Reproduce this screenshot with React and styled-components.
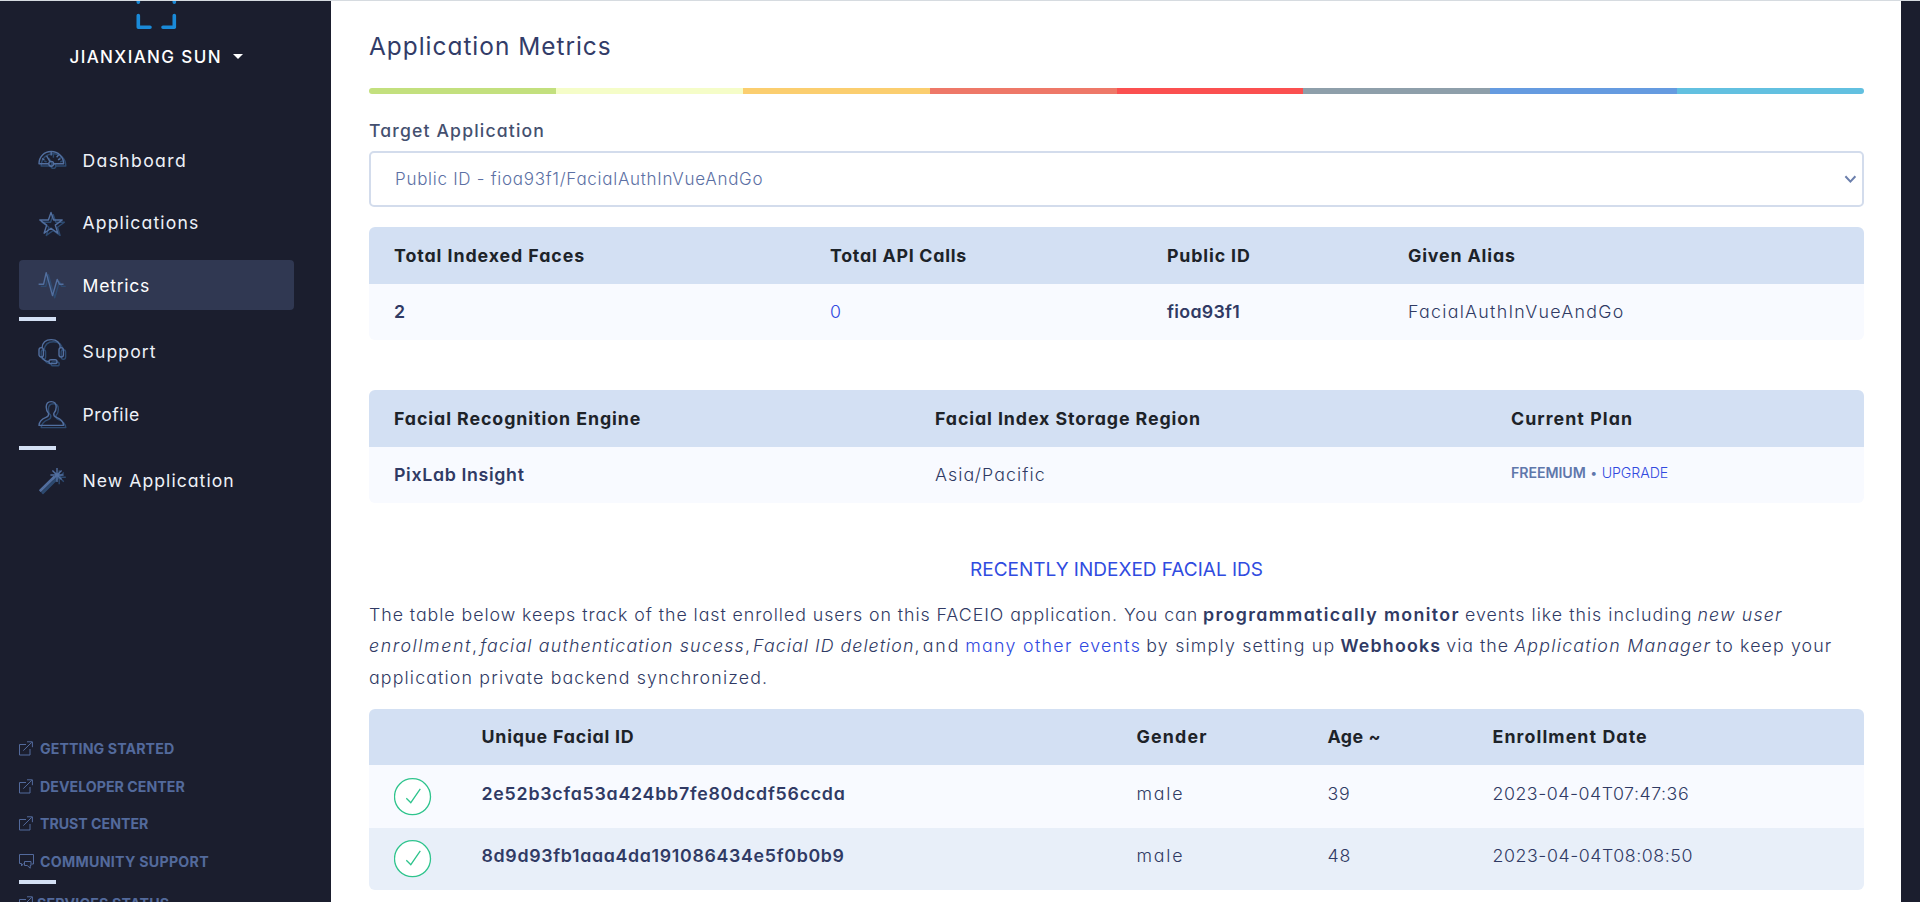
import React from 'react';
import styled, { createGlobalStyle } from 'styled-components';

const GlobalStyle = createGlobalStyle`
  *, *::before, *::after { box-sizing: border-box; }
  body {
    margin: 0;
    background: #1b1e2e;
    font-family: Inter, "Open Sans", sans-serif;
    font-feature-settings: "cv11" 1, "calt" 0;
    font-optical-sizing: none;
    font-variation-settings: "opsz" 14;
  }
`;

/* A run of text with its own tracking, weight and colour. */
const Run = styled.span`
  letter-spacing: ${(p) => p.$ls || 0}px;
  ${(p) => p.$weight && `font-weight: ${p.$weight};`}
  ${(p) => p.$italic && 'font-style: italic;'}
  ${(p) => p.$color && `color: ${p.$color};`}
`;

const Page = styled.div`
  display: flex;
  width: 1920px;
  height: 902px;
  overflow: hidden;
  border-top: 1px solid #d6dbe0;
`;

const Sidebar = styled.aside`
  flex: none;
  width: 331px;
  display: flex;
  flex-direction: column;
  padding-left: 19px;
  overflow: hidden;
  background: #1b1e2e;
`;

const Brand = styled.svg`
  flex: none;
  display: block;
  width: 44px;
  height: 30px;
  margin-left: 115px;
`;

const UserMenu = styled.div`
  flex: none;
  display: flex;
  align-items: center;
  height: 28px;
  margin: 12px 0 0 50.5px;
  font-size: 17px;
  font-weight: 500;
  white-space: nowrap;
  color: #fff;
`;

const Caret = styled.span`
  margin: -1px 0 0 11px;
  border: 5px solid transparent;
  border-top-color: #fff;
  border-bottom: 0;
`;

const Nav = styled.nav`
  flex: none;
  display: flex;
  flex-direction: column;
  margin-top: 58px;
`;

const NavItem = styled.a`
  display: flex;
  align-items: center;
  gap: 14.5px;
  width: 275px;
  height: 50px;
  margin: 6.25px 0;
  padding-left: 19px;
  border-radius: 4px;
  font-size: 17.6px;
  white-space: nowrap;
  color: ${(p) => (p.$active ? '#fff' : '#eef1f8')};
  background: ${(p) => (p.$active ? '#303852' : 'transparent')};
`;

const Separator = styled.div`
  flex: none;
  width: 37px;
  height: 4px;
  background: #d4e0f4;
`;

const NavSvg = styled.svg`
  flex: none;
  width: 30px;
  height: 28px;
  overflow: visible;
  fill: none;
  stroke-width: 1.4;
  stroke-linejoin: round;
`;

const FooterLinks = styled.div`
  flex: none;
  display: flex;
  flex-direction: column;
  margin-top: 218px;
`;

const FooterLink = styled.a`
  display: flex;
  align-items: center;
  gap: ${(p) => p.$gap}px;
  height: 37.6px;
  font-size: 14.2px;
  font-weight: 650;
  white-space: nowrap;
  color: #536a9c;
`;

const SmallSvg = styled.svg`
  flex: none;
  width: 15px;
  height: 15px;
  overflow: visible;
  fill: none;
  stroke: #536a9c;
  stroke-width: 1;
`;

const Main = styled.main`
  flex: none;
  width: 1570px;
  padding: 25px 37px 0 38px;
  background: #fff;
  color: #303a64;
`;

const Title = styled.h1`
  margin: 0;
  height: 40px;
  line-height: 40px;
  font-size: 24.4px;
  font-weight: 400;
  color: #323c68;
`;

const Rainbow = styled.div`
  display: flex;
  height: 6px;
  margin-top: 22px;
  border-radius: 3px;
  overflow: hidden;
`;

const Band = styled.div`
  flex: 1;
  background: ${(p) => p.$color};
`;

const Label = styled.div`
  margin-top: 23px;
  height: 28px;
  line-height: 28px;
  font-size: 17.6px;
  font-weight: 550;
  color: #44506f;
`;

const SelectBox = styled.div`
  display: flex;
  align-items: center;
  justify-content: space-between;
  height: 56px;
  margin-top: 6px;
  padding: 0 5px 0 24px;
  border: 2px solid #d3dcec;
  border-radius: 5px;
  font-size: 17px;
  font-weight: 300;
  color: #5c70a4;
`;

const Table = styled.table`
  width: 100%;
  margin-top: ${(p) => p.$top}px;
  table-layout: fixed;
  border-collapse: collapse;
  border-radius: 6px;
  overflow: hidden;
  font-size: 17.8px;
  font-weight: 300;
  line-height: 24px;
  white-space: nowrap;
`;

const HeadRow = styled.tr`
  height: ${(p) => p.$h}px;
  background: #d3e0f3;
  color: #1d2329;
`;

const BodyRow = styled.tr`
  height: ${(p) => p.$h}px;
  background: ${(p) => (p.$alt ? '#e8eff9' : '#f8faff')};
`;

const Th = styled.th`
  padding: 0 0 0 25px;
  text-align: left;
  font-weight: 650;
  letter-spacing: ${(p) => p.$ls || 0}px;
`;

const Td = styled.td`
  padding: 0 0 ${(p) => p.$lift || 0}px 25px;
  vertical-align: middle;
  letter-spacing: ${(p) => p.$ls || 0}px;
  font-weight: ${(p) => (p.$strong ? 600 : 300)};
  color: ${(p) => p.$color || 'inherit'};
`;

const Plan = styled(Td)`
  font-size: 14.2px;
  color: #5f77ab;
`;

const CheckSvg = styled.svg`
  display: block;
  width: 38px;
  height: 38px;
  fill: none;
  stroke: #2fc48d;
  stroke-width: 1.3;
`;

const SectionTitle = styled.h2`
  margin: 52px 0 0;
  height: 30px;
  line-height: 30px;
  text-align: center;
  font-size: 19px;
  font-weight: 400;
  color: #304be0;
`;

const Intro = styled.p`
  margin: 13.5px 0 0;
  height: 95px;
  font-size: 17.8px;
  font-weight: 300;
  line-height: 31.6px;
`;

const Line = styled.span`
  display: block;
  white-space: pre;
`;

const LINK = '#3049e0';

const icons = {
  gauge: (
    <>
      <path d="M10.6 17.8H1C1 10.5 6.3 5.5 13.2 5.5S25.6 10.5 25.6 17.8H15.8" />
      <circle cx="13.2" cy="17.8" r="2.4" />
      <path d="M12 15.6 8.6 9.8M13.2 6v3.5M20.6 9l-2 2.2M4 12.6l2.4 1.2M22.4 12.6 20 13.8" />
    </>
  ),
  star: <path d="M13 3.4 15.6 11h8.6l-6.9 5.1 2.6 8.1-6.9-4.900-6.900 4.900 2.600-8.100L1.800 11h8.600z" />,
  pulse: <path d="M.6 13.2h5L8.2 1.600l6.300 23L19.200 8.400l2.300 4.800h4" />,
  headset: (
    <>
      <path d="M4 10C4.400 4.600 8 1.600 13.200 1.600S22 4.600 22.400 10M4 18.600c1 3.600 3 4.800 7 5" />
      <rect x="1" y="9.600" width="4.400" height="9.400" rx="2.200" />
      <rect x="21" y="9.600" width="4.400" height="9.400" rx="2.200" />
      <rect x="11" y="21.800" width="8" height="3.800" rx="1.900" />
    </>
  ),
  person: (
    <path d="M8.200 7C8.200 3.200 10.200 1.600 13.200 1.600S18.200 3.200 18.200 7c0 3-1 5-2.400 6.400-.4 2.200.4 3.200 2.600 4 4 1.400 6.800 3 7.200 8H1c.4-5 3.200-6.600 7-8 2.200-.8 3-1.800 2.600-4C9.200 12 8.200 10 8.200 7z" />
  ),
  wand: (
    <>
      <path d="M1.800 23.200 15.800 9.400l1 1L2.800 24.200z" />
      <path d="M19 1v14M12.400 8h13.200M14.400 3.400l9.200 9.200M23.600 3.400l-9.200 9.200" />
    </>
  ),
};

function NavIcon({ name }) {
  return (
    <NavSvg viewBox="0 0 30 28">
      <g stroke="#2d4a70" transform="translate(2.2 2.2)">{icons[name]}</g>
      <g stroke="#526f9f">{icons[name]}</g>
    </NavSvg>
  );
}

function ExternalIcon() {
  return (
    <SmallSvg viewBox="0 0 15 15">
      <path d="M7 3.500H.500v10.500H11V8M4.300 9.600 12.800 1.300M8 .800h5.400v5.400" />
    </SmallSvg>
  );
}

function ChatIcon() {
  return (
    <SmallSvg viewBox="0 0 15 15">
      <path d="M4.500 9.500 2.500 12V9.500H.500V.500h14v9.500H12.600" />
      <path d="M5.500 7.500h6.500v4h-.8v2.700L8.200 11.500H5.500z" />
    </SmallSvg>
  );
}

function Check() {
  return (
    <CheckSvg viewBox="0 0 38 38">
      <circle cx="18.5" cy="18.700" r="18" fill="#fff" />
      <path d="M12.300 20.200 16.800 24.700 26.300 10.900" />
    </CheckSvg>
  );
}

const NAV = [
  ['gauge', 'Dashboard', 1.35],
  ['star', 'Applications', 1.13],
  ['pulse', 'Metrics', 0.75],
  ['-'],
  ['headset', 'Support', 1.1],
  ['person', 'Profile', 0.55],
  ['-'],
  ['wand', 'New Application', 1.05],
];

const LINKS = [
  ['GETTING STARTED', 0.1],
  ['DEVELOPER CENTER', 0.02],
  ['TRUST CENTER', -0.03],
  ['COMMUNITY SUPPORT', 0.28],
];

const BANDS = ['#c3e07e', '#f5fdc8', '#fbce6f', '#ee7868', '#fb5050', '#8e9faa', '#659be0', '#62c0e0'];

const USERS = [
  ['2e52b3cfa53a424bb7fe80dcdf56ccda', 0.76, '39', '2023-04-04T07:47:36', 0.52],
  ['8d9d93fb1aaa4da191086434e5f0b0b9', 0.68, '48', '2023-04-04T08:08:50', 0.55],
];

function Columns({ widths }) {
  return (
    <colgroup>
      {widths.map((w, i) => (
        <col key={i} width={w} />
      ))}
    </colgroup>
  );
}

export default function App() {
  return (
    <>
      <GlobalStyle />
      <Page>
        <Sidebar>
          <Brand viewBox="0 0 44 30" fill="none" stroke="#1a8ad8" strokeWidth="3.600" strokeLinecap="round" strokeLinejoin="round">
            <path d="M4.300 0v1.200M40.300 0v1.200M4.300 14.500v11.700h11.700M40.300 14.500v11.700H29" />
          </Brand>
          <UserMenu>
            <Run $ls={1.38}>JIANXIANG SUN</Run>
            <Caret />
          </UserMenu>
          <Nav>
            {NAV.map(([icon, text, ls], i) =>
              icon === '-' ? (
                <Separator key={i} />
              ) : (
                <NavItem key={i} $active={text === 'Metrics'}>
                  <NavIcon name={icon} />
                  <Run $ls={ls}>{text}</Run>
                </NavItem>
              )
            )}
          </Nav>
          <FooterLinks>
            {LINKS.map(([text, ls], i) => (
              <FooterLink key={text} $gap={6}>
                {i === 3 ? <ChatIcon /> : <ExternalIcon />}
                <Run $ls={ls}>{text}</Run>
              </FooterLink>
            ))}
            <Separator />
            <FooterLink $gap={3}>
              <ExternalIcon />
              <Run $ls={0.2}>SERVICES STATUS</Run>
            </FooterLink>
          </FooterLinks>
        </Sidebar>

        <Main>
          <Title><Run $ls={1}>Application Metrics</Run></Title>
          <Rainbow>
            {BANDS.map((c) => (
              <Band key={c} $color={c} />
            ))}
          </Rainbow>
          <Label><Run $ls={1.16}>Target Application</Run></Label>
          <SelectBox>
            <Run $ls={0.72}>Public ID - fioa93f1/FacialAuthInVueAndGo</Run>
            <svg width="13" height="10" viewBox="0 0 13 10" fill="none" stroke="#6b7fac" strokeWidth="2">
              <path d="M1.400 2.200 6.400 7.600 11.400 2.200" />
            </svg>
          </SelectBox>

          <Table $top={20}>
            <Columns widths={[436, 337, 241, 481]} />
            <thead>
              <HeadRow $h={57}>
                <Th $ls={0.92}>Total Indexed Faces</Th>
                <Th $ls={0.74}>Total API Calls</Th>
                <Th $ls={0.85}>Public ID</Th>
                <Th $ls={0.85}>Given Alias</Th>
              </HeadRow>
            </thead>
            <tbody>
              <BodyRow $h={56}>
                <Td $strong>2</Td>
                <Td $color={LINK}>0</Td>
                <Td $strong $ls={0.3}>fioa93f1</Td>
                <Td $ls={1.28}>FacialAuthInVueAndGo</Td>
              </BodyRow>
            </tbody>
          </Table>

          <Table $top={50}>
            <Columns widths={[541, 576, 378]} />
            <thead>
              <HeadRow $h={57}>
                <Th $ls={0.92}>Facial Recognition Engine</Th>
                <Th $ls={0.9}>Facial Index Storage Region</Th>
                <Th $ls={1.05}>Current Plan</Th>
              </HeadRow>
            </thead>
            <tbody>
              <BodyRow $h={56}>
                <Td $strong $ls={0.65}>PixLab Insight</Td>
                <Td $ls={1.1}>Asia/Pacific</Td>
                <Plan $lift={4}>
                  <Run $weight={600} $ls={-0.08}>FREEMIUM</Run> • <Run $color={LINK} $ls={-0.08}>UPGRADE</Run>
                </Plan>
              </BodyRow>
            </tbody>
          </Table>

          <SectionTitle>RECENTLY INDEXED FACIAL IDS</SectionTitle>

          <Intro>
            <Line>
              <Run $ls={0.94}>The table below keeps track of the last enrolled users on this FACEIO application. You can</Run>{' '}
              <Run $ls={1.38} $weight={600}>programmatically monitor</Run>{' '}
              <Run $ls={1}>events like this including</Run>{' '}
              <Run $ls={1.15} $italic>new user</Run>
            </Line>
            <Line>
              <Run $ls={1.6} $italic>enrollment</Run><Run $ls={-0.9}>, </Run>
              <Run $ls={1.18} $italic>facial authentication sucess</Run><Run $ls={-0.9}>, </Run>
              <Run $ls={1.05} $italic>Facial ID deletion</Run><Run $ls={-0.9}>, </Run>
              <Run $ls={1.9}>and</Run>{' '}
              <Run $ls={1.3} $color={LINK}>many other events</Run>{' '}
              <Run $ls={1.2}>by simply setting up</Run>{' '}
              <Run $ls={1.2} $weight={600}>Webhooks</Run>{' '}
              <Run $ls={1}>via the</Run>{' '}
              <Run $ls={1.26} $italic>Application Manager</Run>{' '}
              <Run $ls={1.1}>to keep your</Run>
            </Line>
            <Line>
              <Run $ls={1.15}>application private backend synchronized.</Run>
            </Line>
          </Intro>

          <Table $top={15.5}>
            <Columns widths={[87.500, 655, 191, 165, 396.500]} />
            <thead>
              <HeadRow $h={56}>
                <Th />
                <Th $ls={0.78}>Unique Facial ID</Th>
                <Th $ls={1.2}>Gender</Th>
                <Th $ls={0.5}>Age ~</Th>
                <Th $ls={1.1}>Enrollment Date</Th>
              </HeadRow>
            </thead>
            <tbody>
              {USERS.map(([id, idLs, age, date, dateLs], i) => (
                <BodyRow key={id} $h={63 - i} $alt={i === 1}>
                  <Td><Check /></Td>
                  <Td $strong $lift={6} $ls={idLs}>{id}</Td>
                  <Td $lift={6} $ls={1.8}>male</Td>
                  <Td $lift={6} $ls={0.8}>{age}</Td>
                  <Td $lift={6} $ls={dateLs}>{date}</Td>
                </BodyRow>
              ))}
            </tbody>
          </Table>
        </Main>
      </Page>
    </>
  );
}
